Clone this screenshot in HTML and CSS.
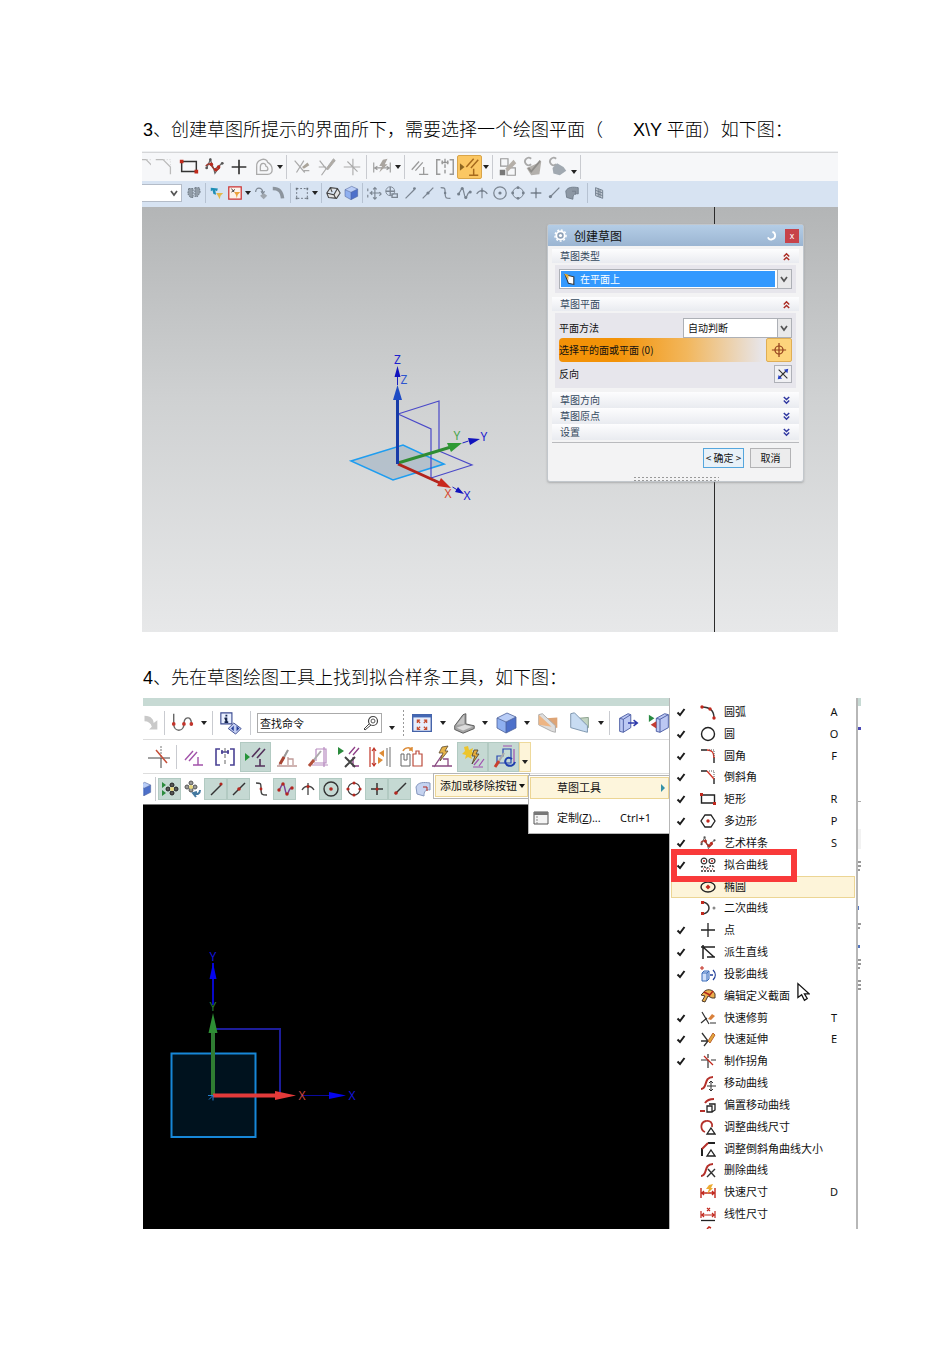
FILE: index.html
```html
<!DOCTYPE html>
<html lang="zh-CN">
<head>
<meta charset="utf-8">
<title>草图绘图步骤</title>
<link rel="stylesheet" href="styles.css">
</head>
<body>
<svg class="sprite" aria-hidden="true">
  <symbol id="fillet" viewBox="0 0 24 24"><path d="M3 4h8l8 8v8" fill="none" stroke="#bbb" stroke-width="1.4"/><path d="M12 4h7v7" fill="none" stroke="#ccc" stroke-dasharray="1 2"/></symbol>
  <symbol id="rect" viewBox="0 0 24 24"><path d="M4 6h16v11H4z" fill="none" stroke="#333" stroke-width="1.6"/><path d="M2 4h4v4H2zM18 15h4v4h-4z" fill="#c02a1c"/></symbol>
  <symbol id="spline" viewBox="0 0 24 24"><path d="M4 13 8 4l4 11 4-3 5-4M12 15l1 4 4-6" fill="none" stroke="#666" stroke-width="1.3"/><path d="M3 11c4-5 6-1 8 2s5 3 7 0" fill="none" stroke="#9b3328" stroke-width="1.5"/><g fill="#b82a1e"><circle cx="9" cy="9" r="2"/><circle cx="14" cy="15" r="2"/><circle cx="17" cy="12" r="2"/></g><g fill="#555"><circle cx="4" cy="13" r="1.5"/><circle cx="8" cy="4" r="1.5"/><circle cx="21" cy="8" r="1.5"/></g></symbol>
  <symbol id="plus" viewBox="0 0 24 24"><path d="M12 4v16M4 12h16" stroke="currentColor" stroke-width="1.8"/></symbol>
  <symbol id="profile" viewBox="0 0 24 24"><path d="M4 20v-8c-1-9 11-11 12-5 6 3 7 13 0 13zM8 16v-4c0-5 6-5 6-1 3 1 3 5 0 5z" fill="none" stroke="#aaa" stroke-width="1.4"/></symbol>
  <symbol id="trim" viewBox="0 0 24 24"><path d="m4 5 11 13M14 5 6 18M14 16h6" stroke="#aaa" stroke-width="1.3"/><path d="m12 12 6-5 2 3-6 4z" fill="#aaa49a"/></symbol>
  <symbol id="extend" viewBox="0 0 24 24"><path d="m4 5 7 9-5 7M3 12h8" fill="none" stroke="#aaa" stroke-width="1.3"/><path d="m11 14 8-11 2 2-8 10z" fill="#b0aba4" stroke="#aaa"/></symbol>
  <symbol id="corner" viewBox="0 0 24 24"><path d="M3 12h18M13 3v18M7 6l11 11" stroke="#aaa" stroke-width="1.2"/></symbol>
  <symbol id="dim" viewBox="0 0 24 24"><path d="M3 7v11M21 7v11M4 13h16m-13-2-3 2 3 2m10-4 3 2-3 2" fill="none" stroke="#999" stroke-width="1.2"/><path d="m13 4 5-1-3 6h3l-9 9 3-7H9z" fill="#aaa5a0"/></symbol>
  <symbol id="constraint" viewBox="0 0 24 24"><path d="m3 15 8-9m-4 10 8-9m1 5v8m-5 0h10" stroke="currentColor" stroke-width="1.4" fill="none"/></symbol>
  <symbol id="mirror" viewBox="0 0 24 24"><path d="M7 4H3v16h4M17 4h4v16h-4M8 7h8M9 5v4m6-4v4" fill="none" stroke="currentColor" stroke-width="1.6"/><path d="M12 3v18" stroke="#666" stroke-dasharray="4 2"/></symbol>
  <symbol id="infer" viewBox="0 0 24 24"><path d="m1 8 5 4-5 4z" fill="var(--go)"/><path d="m8 12 8-9m-3 10 8-9m-5 10v7m-5 0h10" stroke="currentColor" stroke-width="1.6"/></symbol>
  <symbol id="convert" viewBox="0 0 24 24"><path d="M4 3h8v8H4zM12 13h8v8h-9v-6" fill="none" stroke="#999" stroke-width="1.3"/><path d="M3 15h6v6H3z" fill="#777"/><path d="m9 14 9-10 3 4-9 9z" fill="#b5afa8"/></symbol>
  <symbol id="display" viewBox="0 0 24 24"><path d="M10 3a4 4 0 1 0 0 6" fill="none" stroke="#aaa" stroke-width="2"/><path d="m5 13 7-3 9-4-2 14-9 1z" fill="#b3b0ac"/><path d="m7 13 3 4 10-12" fill="none" stroke="#8f8d8a" stroke-width="2"/></symbol>
  <symbol id="finish" viewBox="0 0 24 24"><path d="M10 3a4 4 0 1 0 0 6" fill="none" stroke="#aaa" stroke-width="2"/><path d="m6 13 5-5 7 4 3 4-7 5-7-2z" fill="#a1a9b1"/></symbol>
  <symbol id="gears" viewBox="0 0 18 18"><path d="M3 4h5v10H5L2 10zM10 3h5l1 5-3 5h-3z" fill="#929da8" stroke="#66717c" stroke-dasharray="2 1"/></symbol>
  <symbol id="filter" viewBox="0 0 18 18"><path d="m2 3 8 1-1 3-2-1 1 5-3-1-1-4-2 1z" fill="#1f8fb6"/><path d="M8 9h8l-3 3-1 4-2-4z" fill="#e3b84a"/></symbol>
  <symbol id="filter2" viewBox="0 0 18 18"><path d="M2 2h14v14H2z" fill="#fdf2ea" stroke="#c33" stroke-width="1.4"/><path d="m5 4 3 4M9 5 5 8" stroke="#333"/><path d="M8 8h7l-3 3-1 4-1-4z" fill="#eda33c"/></symbol>
  <symbol id="rotate" viewBox="0 0 18 18"><path d="M3 8c0-6 7-6 8 0m-2-1 2 3 2-3" fill="none" stroke="#7e8894" stroke-width="1.4"/><path d="m8 12 4-3 4 3-4 4z" fill="#9fa6ae"/></symbol>
  <symbol id="hook" viewBox="0 0 18 18"><path d="M2 4c6 0 10 2 11 11" fill="none" stroke="#8c949d" stroke-width="4"/></symbol>
  <symbol id="marquee" viewBox="0 0 18 18"><path d="M3 4h12v11H3z" fill="none" stroke="#5f6873" stroke-dasharray="2 2"/><path d="M2 3h2v2H2zM14 3h2v2h-2zM2 14h2v2H2zM14 14h2v2h-2z" fill="#68717b"/></symbol>
  <symbol id="cubewire" viewBox="0 0 18 18"><path d="m2 9 4-6 8 1 3 5-4 6-9-1zM2 9l8 2 4-7m-4 7 2 4M6 3l2 5" fill="#e2e2e2" stroke="#444" stroke-width="1.2"/></symbol>
  <symbol id="cube" viewBox="0 0 24 24"><path d="m3 7 10-5 9 4-10 5z" fill="#b9cdf7"/><path d="m3 7 9 4v11l-9-5z" fill="#8fb0f0"/><path d="m12 11 10-5v11l-10 5z" fill="#4d70ca"/><path d="m3 7 10-5 9 4v11l-10 5-9-5zM3 7l9 4 10-5M12 11v11" fill="none" stroke="#4b6199" stroke-width=".8"/></symbol>
  <symbol id="move" viewBox="0 0 18 18"><path d="M10 3v13M4 9h13M8 5l2-2 2 2M8 14l2 2 2-2m3-6 2 2-2 2M7 7 5 9l2 2M2 4v3m0 4v3" fill="none" stroke="currentColor" stroke-width="1.3"/></symbol>
  <symbol id="orbit" viewBox="0 0 18 18"><circle cx="7" cy="7" r="5" fill="none" stroke="currentColor"/><path d="M7 2v10M2 7h10m-3 3h6v4h-6z" fill="none" stroke="currentColor" stroke-width="1.5"/></symbol>
  <symbol id="line" viewBox="0 0 18 18"><path d="M4 15 14 5" stroke="currentColor" stroke-width="1.4"/><circle cx="14" cy="4" r="1.6" fill="var(--dot)"/></symbol>
  <symbol id="mid" viewBox="0 0 18 18"><path d="M3 15 15 3" stroke="currentColor" stroke-width="1.4"/><circle cx="9" cy="9" r="1.8" fill="var(--dot)"/></symbol>
  <symbol id="scurve" viewBox="0 0 18 18"><path d="M3 3c5 0 5 0 5 6s1 6 6 6" fill="none" stroke="currentColor" stroke-width="1.4"/><circle cx="8" cy="9" r="1.4" fill="var(--dot)"/></symbol>
  <symbol id="wave" viewBox="0 0 18 18"><path d="M2 10c3 0 3-6 5-6s2 10 4 10 1-6 5-6" fill="none" stroke="var(--wave)" stroke-width="1.4"/><g fill="var(--dot)"><circle cx="3" cy="10" r="1.7"/><circle cx="7" cy="4" r="1.7"/><circle cx="11" cy="14" r="1.7"/><circle cx="16" cy="8" r="1.7"/></g></symbol>
  <symbol id="cross" viewBox="0 0 18 18"><path d="M3 10c3-5 9-5 12 0M9 3v12" fill="none" stroke="currentColor" stroke-width="1.3"/><circle cx="9" cy="6.500" r="1.5" fill="var(--dot)"/></symbol>
  <symbol id="center" viewBox="0 0 18 18"><circle cx="9" cy="9" r="7" fill="none" stroke="currentColor" stroke-width="1.4"/><circle cx="9" cy="9" r="1.8" fill="var(--dot)"/></symbol>
  <symbol id="quad" viewBox="0 0 18 18"><circle cx="9" cy="9" r="6" fill="none" stroke="currentColor" stroke-width="1.1"/><g fill="var(--dot)"><circle cx="9" cy="3" r="1.6"/><circle cx="9" cy="15" r="1.6"/><circle cx="3" cy="9" r="1.6"/><circle cx="15" cy="9" r="1.6"/></g></symbol>
  <symbol id="point" viewBox="0 0 18 18"><path d="M9 3v12M3 9h12" stroke="currentColor" stroke-width="1.5"/><circle cx="9" cy="9" r="1.5" fill="var(--dot)"/></symbol>
  <symbol id="near" viewBox="0 0 18 18"><path d="M4 14 15 3" stroke="currentColor" stroke-width="1.4"/><circle cx="5" cy="13" r="1.8" fill="var(--dot)"/></symbol>
  <symbol id="face" viewBox="0 0 18 18"><path d="M2 7c2-5 8-5 14-4v7c-5-1-6 2-6 6l-7-2z" fill="var(--face)" stroke="var(--faceline)"/><path d="M9 7h4v4" fill="none" stroke="var(--dot)"/></symbol>
  <symbol id="grid" viewBox="0 0 18 18"><path d="m4 3 8 3v9l-8-3zM7 4v9M9 5v9M4 6l8 3M4 9l8 3" fill="#c4ccd6" stroke="#6f7c8b"/></symbol>
  <symbol id="tick" viewBox="0 0 10 10"><path d="M1.500 5.500 4 8 8.500 2" fill="none" stroke="#1c1c1c" stroke-width="2"/></symbol>
  <symbol id="up2" viewBox="0 0 10 10"><path d="m2 5 3-3 3 3M2 9l3-3 3 3" fill="none" stroke="#ab2c24" stroke-width="1.6"/></symbol>
  <symbol id="down2" viewBox="0 0 10 10"><path d="m2 1 3 3 3-3M2 5l3 3 3-3" fill="none" stroke="#2e36a0" stroke-width="1.6"/></symbol>
  <symbol id="chev" viewBox="0 0 10 10"><path d="m2 3 3 4 3-4" fill="none" stroke="#555" stroke-width="1.7"/></symbol>
</svg>

<main class="doc">
  <p class="step">3、创建草图所提示的界面所下，需要选择一个绘图平面（<span class="gap">X\Y</span> 平面）如下图：</p>

  <section class="shot-one">
    <div class="bar bar-main">
      <button class="tool cut" aria-label="圆角"><svg><use href="#fillet"/></svg></button>
      <button class="tool" aria-label="倒斜角"><svg><use href="#fillet"/></svg></button>
      <button class="tool" aria-label="矩形"><svg><use href="#rect"/></svg></button>
      <button class="tool" aria-label="艺术样条"><svg><use href="#spline"/></svg></button>
      <button class="tool" aria-label="点"><svg><use href="#plus"/></svg></button>
      <button class="tool" aria-label="轮廓"><svg><use href="#profile"/></svg></button>
      <button class="drop" aria-label="更多"></button><i class="sep"></i>
      <button class="tool" aria-label="修剪"><svg><use href="#trim"/></svg></button>
      <button class="tool" aria-label="延伸"><svg><use href="#extend"/></svg></button>
      <button class="tool" aria-label="拐角"><svg><use href="#corner"/></svg></button><i class="sep"></i>
      <button class="tool" aria-label="尺寸"><svg><use href="#dim"/></svg></button>
      <button class="drop" aria-label="更多"></button><i class="sep"></i>
      <button class="tool pale" aria-label="约束"><svg><use href="#constraint"/></svg></button>
      <button class="tool pale" aria-label="对称"><svg><use href="#mirror"/></svg></button>
      <button class="tool hot" aria-label="自动约束"><svg><use href="#infer"/></svg></button>
      <button class="drop" aria-label="更多"></button><i class="sep"></i>
      <button class="tool" aria-label="转换"><svg><use href="#convert"/></svg></button>
      <button class="tool" aria-label="显示"><svg><use href="#display"/></svg></button>
      <button class="tool" aria-label="完成"><svg><use href="#finish"/></svg></button>
      <button class="drop low" aria-label="更多"></button><i class="sep"></i>
    </div>
    <div class="bar bar-snap">
      <span class="mini-select"><select aria-label="选择范围"><option></option></select><svg><use href="#chev"/></svg></span>
      <button class="snap" aria-label="齿轮"><svg><use href="#gears"/></svg></button><i class="sep"></i>
      <button class="snap" aria-label="过滤"><svg><use href="#filter"/></svg></button>
      <button class="snap" aria-label="过滤器"><svg><use href="#filter2"/></svg></button>
      <button class="drop" aria-label="更多"></button>
      <button class="snap" aria-label="旋转"><svg><use href="#rotate"/></svg></button>
      <button class="snap" aria-label="弯曲"><svg><use href="#hook"/></svg></button><i class="sep"></i>
      <button class="snap" aria-label="框选"><svg><use href="#marquee"/></svg></button>
      <button class="drop" aria-label="更多"></button><i class="sep"></i>
      <button class="snap" aria-label="线框"><svg><use href="#cubewire"/></svg></button>
      <button class="snap" aria-label="实体"><svg><use href="#cube"/></svg></button><i class="sep"></i>
      <button class="snap" aria-label="移动"><svg><use href="#move"/></svg></button>
      <button class="snap" aria-label="环绕"><svg><use href="#orbit"/></svg></button>
      <button class="snap" aria-label="端点"><svg><use href="#line"/></svg></button>
      <button class="snap" aria-label="中点"><svg><use href="#mid"/></svg></button>
      <button class="snap" aria-label="控制点"><svg><use href="#scurve"/></svg></button>
      <button class="snap" aria-label="极点"><svg><use href="#wave"/></svg></button>
      <button class="snap" aria-label="交点"><svg><use href="#cross"/></svg></button>
      <button class="snap" aria-label="圆心"><svg><use href="#center"/></svg></button>
      <button class="snap" aria-label="象限点"><svg><use href="#quad"/></svg></button>
      <button class="snap" aria-label="现有点"><svg><use href="#point"/></svg></button>
      <button class="snap" aria-label="曲线上的点"><svg><use href="#near"/></svg></button>
      <button class="snap" aria-label="面上的点"><svg><use href="#face"/></svg></button>
      <i class="sep wide"></i>
      <button class="snap" aria-label="栅格"><svg><use href="#grid"/></svg></button>
    </div>

    <div class="canvas-light">
      <svg class="scene" viewBox="0 0 696 425" preserveAspectRatio="xMinYMin meet" aria-label="坐标系">
        <path d="M572.500 0v425" stroke="#2b2b2b"/>
        <path d="m209 254 52-16 41 19-51 16z" fill="#a6b8c6" fill-opacity=".7" stroke="#1e9df0" stroke-width="1.6"/>
        <path d="m256 207 41-13v50M256 207l33 15v49M289 271l41-13-33-14" fill="none" stroke="#4a49c8" stroke-width="1.2"/>
        <path d="m256 256 53-16" stroke="#2f8d33" stroke-width="3"/><path d="m305 236 15 0-11 9z" fill="#2f9a35"/>
        <path d="m256 257 42 19" stroke="#b3241c" stroke-width="3"/><path d="m299 271-4 8 14 2z" fill="#c9281d"/>
        <path d="M255.500 257v-68" stroke="#173ba8" stroke-width="3"/><path d="m251 193 4.500-15 4.500 15z" fill="#1d4bc4"/>
        <path d="M255.500 178v-12m65 70 6-2m-16 46 5 3" stroke="#1a20c0"/>
        <path d="m252.500 170 3-11 3 11zM326 231l12 1-10 6zM316 280l6 7-9-2z" fill="#1113bd"/>
        <g class="axis"><text x="255.500" y="157" fill="#1b20cf">Z</text><text x="262" y="177" fill="#2e55cf">Z</text><text x="315" y="233" fill="#48a54b">Y</text><text x="342" y="234" fill="#1b20cf">Y</text><text x="306" y="291" fill="#d6492f">X</text><text x="325" y="293" fill="#1b20cf">X</text></g>
      </svg>

      <form class="dialog" onsubmit="return false">
        <header class="dialog-head">
          <svg viewBox="0 0 14 14"><circle cx="7" cy="7" r="4.500" fill="#8fa2b8" stroke="#fff" stroke-width="2"/><circle cx="7" cy="7" r="6" fill="none" stroke="#fff" stroke-width="1.5" stroke-dasharray="2 2"/><circle cx="7" cy="7" r="1.700" fill="#fff"/></svg>
          <h2>创建草图</h2>
          <button class="reset" aria-label="重置"><svg viewBox="0 0 12 12"><path d="M7 2c4 1 4 7 0 8-2 1-4 0-5-2" fill="none" stroke="#fff" stroke-width="2"/></svg></button>
          <button class="close" aria-label="关闭">x</button>
        </header>
        <div class="dialog-body">
          <button class="sect">草图类型<svg><use href="#up2"/></svg></button>
          <div class="panel">
            <span class="combo chosen"><svg viewBox="0 0 12 12"><path d="m2 2 8 2v7l-5-1z" fill="#fff" stroke="#333"/><path d="m1 1 4 1v5z" fill="#e5ad35"/></svg><select aria-label="草图类型"><option>在平面上</option></select><b><svg><use href="#chev"/></svg></b></span>
          </div>
          <button class="sect">草图平面<svg><use href="#up2"/></svg></button>
          <div class="panel rows">
            <div class="row"><label for="method">平面方法</label><span class="combo short"><select id="method"><option>自动判断</option></select><b><svg><use href="#chev"/></svg></b></span></div>
            <div class="row pick"><span>选择平的面或平面 (0)</span><button class="target" aria-label="选择平面"><svg viewBox="0 0 18 18"><circle cx="9" cy="9" r="4.500" fill="none" stroke="#93401d" stroke-width="1.4"/><path d="M9 1v16M1 9h16" stroke="#93401d" stroke-width="1.4"/></svg></button></div>
            <div class="row"><span>反向</span><button class="flip" aria-label="反向"><svg viewBox="0 0 16 16"><path d="m3 3 10 10M4 12l8-8" stroke="#333" stroke-width="1.3"/><path d="m9 3 5-1-1 5zM2 14l1-5 4 4z" fill="#273fc0"/></svg></button></div>
          </div>
          <button class="sect tight">草图方向<svg><use href="#down2"/></svg></button>
          <button class="sect tight">草图原点<svg><use href="#down2"/></svg></button>
          <button class="sect tight">设置<svg><use href="#down2"/></svg></button>
          <footer class="actions"><button class="ok">&lt; 确定 &gt;</button><button>取消</button></footer>
          <div class="grip"></div>
        </div>
      </form>
    </div>
  </section>

  <p class="step second">4、先在草图绘图工具上找到拟合样条工具，如下图：</p>

  <section class="shot-two">
    <div class="work">
      <div class="band"></div>
      <div class="bar bar-a">
        <button class="t-cut" aria-label="撤消"><svg viewBox="0 0 24 24"><path d="M6 4c8 0 10 5 10 8l4-3v10h-9l3-3c-1-4-4-6-8-6z" fill="#c9c9c9"/></svg></button><i class="sep"></i>
        <button class="big" aria-label="曲线"><svg viewBox="0 0 28 24"><path d="M4 2v11c0 9 11 9 11 0 0-8 8-9 8-1v3" fill="none" stroke="#666" stroke-width="1.500"/><g fill="#c3342b"><circle cx="4" cy="13" r="2"/><circle cx="15" cy="13" r="2"/><circle cx="23" cy="13" r="2"/></g></svg></button>
        <button class="drop" aria-label="更多"></button><i class="sep"></i>
        <button class="big" aria-label="信息"><svg viewBox="0 0 28 26"><path d="M3 2h12v12H3z" fill="#e8efff" stroke="#3a4990" stroke-width="1.200"/><path d="M9 4v2M7 8h2v4m-2 0h4" stroke="#16254f" stroke-width="2"/><path d="m11 19 6-6 8 6-6 6z" fill="#c2cdf1" stroke="#3a4990"/><path d="m17 16-3 3 3 3zM20 16v6l3-3z" fill="#273f9a"/></svg></button><i class="sep"></i>
        <label class="search"><input type="text" value="查找命令" aria-label="查找命令"><svg viewBox="0 0 16 16"><circle cx="10" cy="6" r="4.500" fill="none" stroke="#444" stroke-width="1.200"/><circle cx="10" cy="6" r="2" fill="none" stroke="#555"/><path d="m6 9-5 5 1 1 6-5" fill="none" stroke="#444"/></svg></label>
        <button class="drop low" aria-label="更多"></button><i class="dots"></i>
        <button class="big" aria-label="适合窗口"><svg viewBox="0 0 28 24"><path d="M4 3h20v18H4z" fill="#e7edfb" stroke="#4462a8" stroke-width="1.500"/><path d="M4 3h20v3H4z" fill="#4367b4"/><path d="m9 9 3 3m7-3-3 3m-7 7 3-3m7 3-3-3M9 12V9h3m4 0h3v3M9 16v3h3m4 0h3v-3" fill="none" stroke="#c64c30" stroke-width="1.300"/></svg></button>
        <button class="drop" aria-label="更多"></button>
        <button class="big" aria-label="渲染"><svg viewBox="0 0 28 24"><path d="m4 15 9-12 3-1v11l9 2v3l-12 5-9-4z" fill="#a5a5a5" stroke="#555"/><path d="m6 14 8-10v9z" fill="#c6c6c6"/><path d="m6 17 9-3 8 2-10 4z" fill="#dcdcdc"/></svg></button>
        <button class="drop" aria-label="更多"></button>
        <button class="big" aria-label="着色"><svg><use href="#cube"/></svg></button>
        <button class="drop" aria-label="更多"></button>
        <button class="big" aria-label="剖切"><svg viewBox="0 0 28 24"><path d="m12 7 12-1v11l-9 1z" fill="#dda476"/><path d="m4 3 4-1 14 13v7l-4-1L4 14z" fill="#ddd" stroke="#aaa"/><path d="M4 3 18 16 4 14z" fill="#edb584"/></svg></button>
        <button class="big" aria-label="编辑截面"><svg viewBox="0 0 28 24"><path d="m12 7 11-1v11l-9 1z" fill="#c2d4c2" stroke="#889e8a"/><path d="m4 2 4-1 14 14v7l-4-1L4 17z" fill="#c8dcf2" stroke="#7992ab"/></svg></button>
        <button class="drop" aria-label="更多"></button><i class="sep"></i>
        <button class="big" aria-label="拉伸"><svg viewBox="0 0 28 24"><path d="m5 7 9-5 3 1v14l-8 5-4-1zM5 7l4 1v14M9 8l8-5" fill="#bcc8f3" stroke="#495ba2"/><path d="M14 12h9m-3-3 4 3-4 3" fill="none" stroke="#2d39aa" stroke-width="1.600"/></svg></button>
        <button class="big" aria-label="移动面"><svg viewBox="0 0 28 24"><path d="m10 7 9-5 4 1v14l-9 5-4-1zM10 7l4 1v14M14 8l9-5" fill="#bcc8f3" stroke="#495ba2"/><path d="m2 3 6 4-6 4z" fill="#298b43"/><path d="m10 10-6 4 6 4z" fill="#c43c32"/></svg></button>
      </div>
      <div class="bar bar-b">
        <button class="mid" aria-label="制作拐角"><svg viewBox="0 0 24 24"><path d="M1 13h22M14 13v10" stroke="#444"/><path d="M14 1v12" stroke="#777" stroke-dasharray="2 1"/><path d="m9 5 11 13" stroke="#c54d36" stroke-width="1.500"/></svg></button><i class="sep"></i>
        <button class="mid plum" aria-label="约束"><svg><use href="#constraint"/></svg></button>
        <button class="mid navy" aria-label="对称"><svg><use href="#mirror"/></svg></button>
        <button class="mid on" aria-label="自动约束"><svg><use href="#infer"/></svg></button>
        <button class="mid" aria-label="显示约束"><svg viewBox="0 0 24 24"><path d="m4 20 9-15m0 7v8M2 21h20M13 14h5v6" fill="none" stroke="#c09a98" stroke-width="1.300"/><path d="m7 16 6-11" stroke="#999" stroke-width="2"/><path d="m5 19 4-7" stroke="#a84432" stroke-width="3"/></svg></button>
        <button class="mid" aria-label="自动尺寸"><svg viewBox="0 0 24 24"><path d="M10 4h10v14H8m2-14v12M18 2v20M6 20h16" fill="none" stroke="#b78bc0" stroke-width="1.200"/><path d="M7 16 15 6" stroke="#aaa" stroke-width="2"/><path d="m3 21 5-6" stroke="#b3503c" stroke-width="3"/></svg></button>
        <button class="mid" aria-label="删除约束"><svg viewBox="0 0 24 24"><path d="m1 2 6 4-6 4z" fill="#2a8b3c"/><path d="m12 9 6-7m-2 8 6-7M16 12v9h6" fill="none" stroke="#8e3f87" stroke-width="1.300"/><path d="m8 12 10 10m0-10L8 22" stroke="#444" stroke-width="2"/></svg></button>
        <button class="mid" aria-label="动画尺寸"><svg viewBox="0 0 24 24"><path d="M2 2v20M6 4v16M4 6l2-3 2 3m-4 12 2 3 2-3" fill="none" stroke="#c13527" stroke-width="1.200"/><path d="M19 3v18M22 2v20" stroke="#888" stroke-width="1.200"/><path d="m16 5-5 3 5 4zM10 12l5 3-5 4z" fill="#dd8c37"/></svg></button>
        <button class="mid" aria-label="转换对象"><svg viewBox="0 0 24 24"><path d="M2 9v12h9V9H8v6H5V9z" fill="none" stroke="#666"/><path d="M14 21V9h3V6h3v3h3v12z" fill="none" stroke="#bc4c3c" stroke-width="1.200"/><path d="M4 6c2-4 7-4 9-1V2m0 3h-3" fill="none" stroke="#db8a35" stroke-width="1.500"/></svg></button>
        <button class="mid" aria-label="备选解"><svg viewBox="0 0 24 24"><path d="m4 22 8-12M2 21h20M13 14h5v7" fill="none" stroke="#8b4b83" stroke-width="1.300"/><path d="m12 2 6-1-3 5h3l-8 10 3-8h-4z" fill="#e6b44a" stroke="#5d4b30" stroke-width=".8"/></svg></button>
        <button class="mid on" aria-label="推断约束"><svg viewBox="0 0 24 24"><path d="m7 1 1 4 4-2-1 4 4 2-5 1 1 4-4-2-3 2 1-4-4-1 3-3-1-4z" fill="#edc52c"/><path d="m13 5-2 6h3l-3 8 7-10h-3l2-4z" fill="#e5ac3c" stroke="#473c2b" stroke-width=".8"/><path d="m13 20 5-6m0 7 5-7M12 22h10" stroke="#a04fb0" stroke-width="1.200"/></svg></button>
        <button class="mid on" aria-label="连续尺寸"><svg viewBox="0 0 24 24"><path d="M11 4h8v14H5v-7h6z" fill="none" stroke="#2a49b0" stroke-width="1.200"/><path d="M11 1h9M22 4v14" stroke="#a04fb0" stroke-width="1.200"/><path d="M20 14c-5-4-9 2-5 6 4 2 7 0 8-3" fill="none" stroke="#1e3fae" stroke-width="2"/><path d="m7 16 5-8" stroke="#aaa" stroke-width="2"/><path d="m3 22 4-6" stroke="#c9402d" stroke-width="3"/></svg></button>
        <button class="drop low cream" aria-label="添加或移除"></button>
      </div>
      <div class="bar bar-c">
        <button class="half" aria-label="实体"><svg><use href="#cube"/></svg></button><i class="sep"></i>
        <button class="small on" aria-label="启用捕捉"><svg viewBox="0 0 18 18"><path d="m1 2 4 3-4 3zM1 10l4 3-4 3z" fill="#2b8b3d"/><g fill="#555" stroke="#222"><circle cx="11" cy="5" r="2"/><circle cx="11" cy="13" r="2"/><circle cx="7" cy="9" r="2"/><circle cx="15" cy="9" r="2"/></g><circle cx="11" cy="9" r="2" fill="#eada7c"/></svg></button>
        <button class="small" aria-label="清除捕捉"><svg viewBox="0 0 18 18"><g fill="#999" stroke="#555"><circle cx="7" cy="3" r="2"/><circle cx="7" cy="10" r="2"/><circle cx="3" cy="7" r="2"/><circle cx="11" cy="7" r="2"/></g><circle cx="7" cy="7" r="2" fill="#eada7c"/><path d="M10 13c3 2 6 1 6-3m-3 2-4 1 3 4" fill="none" stroke="#4479a0" stroke-width="2"/></svg></button>
        <button class="small on" aria-label="端点"><svg><use href="#line"/></svg></button>
        <button class="small on" aria-label="中点"><svg><use href="#mid"/></svg></button>
        <button class="small" aria-label="控制点"><svg><use href="#scurve"/></svg></button>
        <button class="small on" aria-label="极点"><svg><use href="#wave"/></svg></button>
        <button class="small" aria-label="交点"><svg><use href="#cross"/></svg></button>
        <button class="small on" aria-label="圆心"><svg><use href="#center"/></svg></button>
        <button class="small" aria-label="象限点"><svg><use href="#quad"/></svg></button>
        <button class="small on" aria-label="现有点"><svg><use href="#point"/></svg></button>
        <button class="small on" aria-label="曲线上的点"><svg><use href="#near"/></svg></button>
        <button class="small" aria-label="面上的点"><svg><use href="#face"/></svg></button>
      </div>
      <div class="canvas-dark">
        <svg class="scene" viewBox="0 0 526 424" preserveAspectRatio="xMinYMin meet" aria-label="草图坐标系">
          <path d="M28.500 248.500h84v83.500h-84z" fill="#00121e" stroke="#1787d8" stroke-width="2"/>
          <path d="M72 224h65v64" fill="none" stroke="#1d1d9a" stroke-width="2"/>
          <path d="M70 158v42" stroke="#0808c8" stroke-width="2"/><path d="m66.500 174 3.500-16 3.500 16z" fill="#0505ee"/>
          <path d="M159 290.500h28" stroke="#0a0a9c"/><path d="m186 287 17 3.500-17 3.500z" fill="#0505ee"/>
          <path d="M70 290v-64" stroke="#2f7d32" stroke-width="4"/><path d="m65.500 228 4.500-20 4.500 20z" fill="#2e8f34"/>
          <path d="M70 290.500h64" stroke="#e23a3a" stroke-width="4"/><path d="m132 286 21 4.500-21 4.500z" fill="#e43a3a"/>
          <path d="M65 290.500h5v5m-4-1 4-4" stroke="#247fd0" fill="none"/>
          <g class="axis"><text x="70" y="156" fill="#1414dd">Y</text><text x="70" y="206" fill="#2c7a35">Y</text><text x="159" y="295" fill="#c4453f">X</text><text x="209" y="295" fill="#1414dd">X</text></g>
        </svg>
      </div>

      <div class="pop-add"><button>添加或移除按钮<i></i></button></div>
      <div class="pop-sub" role="menu">
        <button class="lit" role="menuitem">草图工具<i></i></button>
        <button role="menuitem"><svg viewBox="0 0 16 14"><path d="M1 1h14v12H1z" fill="#f4f4f4" stroke="#555"/><path d="M1 1h14v3H1z" fill="#777"/><path d="M4 5v8" stroke="#888" stroke-dasharray="2 1"/></svg><span>定制(<u>Z</u>)...</span><kbd>Ctrl+1</kbd></button>
      </div>
    </div>

    <div class="menu" role="menu">
      <div class="items">
        <button><svg class="ck"><use href="#tick"/></svg><svg class="ic" viewBox="0 0 16 16"><path d="M2 3c7 0 12 3 12 11" fill="none" stroke="#333" stroke-width="1.400"/><g fill="#c1281d"><circle cx="2" cy="3" r="1.700"/><circle cx="10" cy="5" r="1.700"/><circle cx="14" cy="14" r="1.700"/></g></svg><span>圆弧</span><kbd>A</kbd></button>
        <button><svg class="ck"><use href="#tick"/></svg><svg class="ic" viewBox="0 0 16 16"><circle cx="8" cy="8" r="6.500" fill="none" stroke="#222" stroke-width="1.400"/></svg><span>圆</span><kbd>O</kbd></button>
        <button><svg class="ck"><use href="#tick"/></svg><svg class="ic" viewBox="0 0 16 16"><path d="M1 2h6m7 7v6" stroke="#222" stroke-width="1.400"/><path d="M7 2c5 0 7 2 7 8" fill="none" stroke="#d33527" stroke-width="1.400"/><path d="M9 2h5v6" fill="none" stroke="#555" stroke-dasharray="1 1"/></svg><span>圆角</span><kbd>F</kbd></button>
        <button><svg class="ck"><use href="#tick"/></svg><svg class="ic" viewBox="0 0 16 16"><path d="M1 2h6m7 7v6" stroke="#222" stroke-width="1.400"/><path d="m7 2 7 8" stroke="#d33527" stroke-width="1.400"/><path d="M9 2h5v6" fill="none" stroke="#555" stroke-dasharray="1 1"/></svg><span>倒斜角</span></button>
        <button><svg class="ck"><use href="#tick"/></svg><svg class="ic" viewBox="0 0 16 16"><path d="M1.500 4h13v8h-13z" fill="none" stroke="#222" stroke-width="1.400"/><path d="M0 2h3v3H0zM13 11h3v3h-3z" fill="#c1281d"/></svg><span>矩形</span><kbd>R</kbd></button>
        <button><svg class="ck"><use href="#tick"/></svg><svg class="ic" viewBox="0 0 16 16"><path d="M5 2h6l4 6-4 6H5L1 8z" fill="none" stroke="#222" stroke-width="1.300"/><circle cx="8" cy="8" r="1.700" fill="#c1281d"/></svg><span>多边形</span><kbd>P</kbd></button>
        <button><svg class="ck"><use href="#tick"/></svg><svg class="ic" viewBox="2 2 21 19"><use href="#spline" width="24" height="24"/></svg><span>艺术样条</span><kbd>S</kbd></button>
        <button><svg class="ck"><use href="#tick"/></svg><svg class="ic" viewBox="0 0 16 16"><circle cx="4" cy="4" r="2.800" fill="none" stroke="#333" stroke-width="1.200"/><ellipse cx="12" cy="4" rx="3" ry="2.500" fill="none" stroke="#333" stroke-width="1.200"/><path d="M3 4h2m6 0h2" stroke="#c1281d" stroke-width="1.500"/><path d="M1 10c4-2 5 3 8 0s4 0 6 0M1 14h14" fill="none" stroke="#333" stroke-width="1.400" stroke-dasharray="2 1"/><path d="M3 12h10" stroke="#c1281d" stroke-dasharray="1 2"/></svg><span>拟合曲线</span></button>
        <button class="lit"><i class="ck"></i><svg class="ic" viewBox="0 0 16 16"><ellipse cx="8" cy="8" rx="7" ry="5" fill="none" stroke="#222" stroke-width="1.400"/><path d="m8 5.500 2.500 2.500L8 10.500 5.500 8z" fill="#c1281d"/></svg><span>椭圆</span></button>
        <button><i class="ck"></i><svg class="ic" viewBox="0 0 16 16"><path d="M3 2c8 2 8 10 0 12" fill="none" stroke="#333" stroke-width="1.500"/><path d="M1 1h3v3H1zM1 12h3v3H1z" fill="#c1281d"/><circle cx="14" cy="8" r="1.500" fill="#888"/></svg><span>二次曲线</span></button>
        <button><svg class="ck"><use href="#tick"/></svg><svg class="ic" viewBox="0 0 16 16"><path d="M8 1v14M1 8h14" stroke="#222" stroke-width="1.300"/></svg><span>点</span></button>
        <button><svg class="ck"><use href="#tick"/></svg><svg class="ic" viewBox="0 0 16 16"><path d="M1 3h14M3 1v14M3 3l11 10M7 13h8" fill="none" stroke="#222" stroke-width="1.500"/></svg><span>派生直线</span></button>
        <button><svg class="ck"><use href="#tick"/></svg><svg class="ic" viewBox="0 0 16 16"><path d="M0 2h4M2 0v4" stroke="#c1281d"/><path d="m2 7 2-2h5v8l-2 2H2zM2 7h5v8M7 7l2-2" fill="#cfe0fa" stroke="#3a6db9"/><path d="M10 9h3M13 4c3 3 3 7 0 10" fill="none" stroke="#23409a" stroke-width="1.300"/></svg><span>投影曲线</span></button>
        <button><i class="ck"></i><svg class="ic" viewBox="0 0 16 16"><path d="M3 5c3-5 10-4 12 1v4h-3L8 8l-3 6-3-1 3-5-4-1z" fill="#edb04e" stroke="#4c3a28"/><path d="m4 4 6 3m3-4-4 5" stroke="#b3281c" stroke-width="1.500"/></svg><span>编辑定义截面</span></button>
        <button><svg class="ck"><use href="#tick"/></svg><svg class="ic" viewBox="0 0 16 16"><path d="m2 2 7 12M7 8l-6 5m9 0h6" stroke="#333" stroke-width="1.200"/><path d="m8 9 4-5 3 2-4 4z" fill="#d9803a"/></svg><span>快速修剪</span><kbd>T</kbd></button>
        <button><svg class="ck"><use href="#tick"/></svg><svg class="ic" viewBox="0 0 16 16"><path d="m2 2 6 8-4 5M1 10h7" fill="none" stroke="#333" stroke-width="1.300"/><path d="m8 10 5-8 2 2-5 8z" fill="#e3a93b" stroke="#be6530"/></svg><span>快速延伸</span><kbd>E</kbd></button>
        <button><svg class="ck"><use href="#tick"/></svg><svg class="ic" viewBox="0 0 16 16"><path d="M1 7h7v8M8 1v4m3 2h5" fill="none" stroke="#333" stroke-width="1.200"/><path d="m4 3 9 9" stroke="#c1281d" stroke-width="1.300"/></svg><span>制作拐角</span></button>
        <button><i class="ck"></i><svg class="ic" viewBox="0 0 16 16"><path d="M1 14c7 0 2-12 12-12" fill="none" stroke="#b4302a" stroke-width="2"/><path d="M11 6v9m-4-4h9M9 8l2-2 2 2m-4 6 2 2 2-2" fill="none" stroke="#333"/></svg><span>移动曲线</span></button>
        <button><i class="ck"></i><svg class="ic" viewBox="0 0 16 16"><path d="M0 14h5m0-8c2-3 4-4 9-4" fill="none" stroke="#b4302a" stroke-width="2"/><path d="M7 9h5v6H7zM9 7h6v6l-3 2" fill="none" stroke="#222" stroke-width="1.300"/></svg><span>偏置移动曲线</span></button>
        <button><i class="ck"></i><svg class="ic" viewBox="0 0 16 16"><path d="M5 13C0 11 0 3 6 2c4-1 7 2 6 6" fill="none" stroke="#b4302a" stroke-width="1.800"/><path d="m11 9 4 6H7z" fill="none" stroke="#222" stroke-width="1.300"/></svg><span>调整曲线尺寸</span></button>
        <button><i class="ck"></i><svg class="ic" viewBox="0 0 16 16"><path d="M2 15V7m6-5h7" stroke="#222" stroke-width="2"/><path d="m2 8 6-6" stroke="#b4302a" stroke-width="2"/><path d="m11 9 4 6H7z" fill="none" stroke="#222" stroke-width="1.300"/></svg><span>调整倒斜角曲线大小</span></button>
        <button><i class="ck"></i><svg class="ic" viewBox="0 0 16 16"><path d="M1 14c7 0 2-12 12-12" fill="none" stroke="#b4302a" stroke-width="2"/><path d="m8 7 7 8M15 7l-8 8" stroke="#333" stroke-width="1.400"/></svg><span>删除曲线</span></button>
        <button><i class="ck"></i><svg class="ic" viewBox="0 0 16 16"><path d="M1 4v10M15 4v10M1 9h14M4 7 2 9l2 2m8-4 2 2-2 2" fill="none" stroke="#c1281d" stroke-width="1.400"/><path d="m9 1 4-1-2 4h2l-6 6 2-5H6z" fill="#edaa32"/></svg><span>快速尺寸</span><kbd>D</kbd></button>
        <button><i class="ck"></i><svg class="ic" viewBox="0 0 16 16"><path d="M1 5v7M15 5v7M1 9h14M4 7 2 9l2 2m8-4 2 2-2 2M7 2l3 3m0-3L7 5" fill="none" stroke="#c1281d" stroke-width="1.200"/><path d="M1 14.500h14" stroke="#222" stroke-width="1.300"/></svg><span>线性尺寸</span></button>
      </div>
      <svg class="peek" viewBox="0 0 16 4"><path d="m9 4 2-2 2 1" fill="none" stroke="#c1281d" stroke-width="1.500"/></svg>
      <div class="mark"></div>
      <svg class="pointer" viewBox="0 0 14 20"><path d="M1 1v15l4-3 3 6 3-2-3-5h5z" fill="#fff" stroke="#111" stroke-width="1.400"/></svg>
    </div>
    <div class="edge"><svg viewBox="0 0 3 531" preserveAspectRatio="xMinYMin slice"><path d="M0 164h3M0 168h3M0 172h2M0 226h3M0 230h2M0 262h3M0 266h3M0 270h2M0 283h3M0 287h3M0 291h3" stroke="#333"/><path d="M0 208h1v4H0zM0 247h2v3H0z" fill="#5577c0"/></svg></div>
  </section>
</main>
</body>
</html>
```
FILE: styles.css
```css
* { box-sizing: border-box; }
body {
  margin: 0;
  background: #fff;
  color: #111;
  font-family: "Liberation Sans", "Noto Sans CJK SC", sans-serif;
}
button, input, select {
  margin: 0;
  padding: 0;
  border: 0;
  background: none;
  color: inherit;
  font: inherit;
}
svg { display: block; flex: none; }
.sprite { position: absolute; width: 0; height: 0; }

.doc { padding: 118px 89px 116px 142px; }
.step {
  margin: 0 0 9px 1px;
  font-size: 18px;
  line-height: 24px;
  font-weight: 300;
  color: #000;
  white-space: nowrap;
}
.step .gap { margin-left: 30px; }
.step.second { margin: 34px 0 8px 1px; }

/* toolbars */
.bar { display: flex; align-items: center; overflow: hidden; }
.bar > * { flex: none; }
.bar button { display: flex; align-items: center; justify-content: center; }
.sep { width: 1px; height: 24px; margin: 0 2px; background: #c9cbd0; }
.drop { width: 8px; height: 20px; }
.drop::after { content: ""; border: 3px solid transparent; border-top: 4px solid #222; border-bottom: 0; }
.drop.low { padding-top: 10px; }

/* first capture */
.shot-one { margin-right: 23px; border-top: 1px solid #eef0f2; }
.bar-main { height: 29px; background: #f6f7f9; border-top: 1px solid #d5d6d8; }
.tool { width: 25px; height: 24px; color: #333; }
.tool svg { width: 22px; height: 22px; }
.tool.cut { width: 9px; overflow: hidden; }
.tool.pale { color: #9a9a9a; }
.tool.hot { --go: #8d6521; color: #a76a1d; background: #fbc763; border: 1px solid #d9a54a; border-radius: 2px; }
.bar-snap {
  --dot: #75808d; --wave: #7b8591; --face: #8c97a4; --faceline: #6f7b88;
  height: 26px;
  padding-bottom: 2px;
  color: #7b8591;
  background: #d7e3f2;
}
.bar-snap .sep { height: 20px; background: #b6c2d2; }
.bar-snap .sep.wide { margin: 0 3px 0 6px; }
.snap { width: 18px; height: 22px; }
.snap svg { width: 16px; height: 16px; }
.mini-select { display: flex; align-items: center; width: 40px; height: 18px; margin-right: 3px; background: #fff; border: 1px solid #b4bcc8; border-left: 0; }
.mini-select select { flex: 1; min-width: 0; appearance: none; }
.mini-select svg { width: 10px; height: 10px; margin-right: 2px; }

.canvas-light { position: relative; background: linear-gradient(#b3b5b6, #cfd1d2 45%, #e7e8e9); }
.scene { width: 100%; height: auto; }
.axis { font: 12px "Noto Sans", sans-serif; text-anchor: middle; }

/* dialog */
.dialog {
  position: absolute;
  top: 17px;
  right: 34px;
  width: 257px;
  background: #f3f3f4;
  border: 1px solid #c2c7cc;
  border-radius: 3px;
  box-shadow: 0 1px 2px #8888;
  font: 10px/14px "Noto Sans CJK SC", sans-serif;
  color: #111;
}
.dialog-head { display: flex; align-items: center; height: 21px; padding: 0 4px 0 6px; background: linear-gradient(#b4cde6, #9bb5d2); }
.dialog-head > svg { width: 13px; height: 13px; }
.dialog-head h2 { flex: 1; margin: 0 0 0 7px; font-size: 12px; font-weight: 400; line-height: 18px; }
.reset svg { width: 11px; height: 11px; margin-right: 8px; }
.close { width: 14px; height: 14px; background: #c7424a; color: #fff; font-size: 9px; line-height: 10px; }
.dialog-body { padding: 3px 4px 0; }
.sect { display: flex; align-items: center; justify-content: space-between; width: 100%; height: 14px; padding: 0 8px; color: #34495e; background: linear-gradient(#fdfdfe, #e9ebf0); }
.sect svg { width: 9px; height: 9px; }
.sect.tight { height: 16px; }
.panel { margin: 2px 3px 4px; padding: 4px; background: #e7e6ec; }
.panel.rows { padding-bottom: 2px; }
.combo { display: flex; align-items: stretch; height: 20px; background: #fff; border: 1px solid #adb0b6; }
.combo select { flex: 1; min-width: 0; padding-left: 4px; appearance: none; }
.combo b { display: flex; align-items: center; width: 14px; padding-left: 1px; background: #e9e9ea; border-left: 1px solid #adb0b6; }
.combo b svg { width: 10px; height: 10px; }
.combo.chosen > svg { width: 17px; height: 16px; margin: 1px 0 1px 1px; padding: 1px 2px; background: #3399fe; }
.combo.chosen select { margin: 1px 2px 1px 0; padding-left: 2px; background: #3399fe; color: #fff; }
.combo.short { width: 109px; }
.row { display: flex; align-items: center; justify-content: space-between; height: 24px; }
.pick { border-radius: 4px 0 0 4px; background: linear-gradient(90deg, #f39207 25%, #f2b75d 55%, #e7e6ec 88%); }
.panel .row:first-child { height: 21px; }
.target { display: grid; place-items: center; width: 26px; height: 24px; background: #fdd47c; border: 1px solid #dfae55; border-radius: 2px; }
.target svg { width: 16px; height: 16px; }
.flip { display: grid; place-items: center; width: 18px; height: 18px; background: #f0f0f3; border: 1px solid #afb1b8; }
.flip svg { width: 14px; height: 14px; }
.actions { display: flex; justify-content: flex-end; gap: 6px; margin-top: 2px; padding: 5px 8px 8px; border-top: 1px solid #b9babd; }
.actions button { width: 41px; height: 20px; white-space: nowrap; background: #ececed; border: 1px solid #b3b3b5; }
.actions .ok { border-color: #55a6dd; background: #e8f1f8; }
.grip { width: 86px; height: 5px; margin: 0 auto; background: radial-gradient(circle, #999 1px, transparent 1px) 0 0 / 4px 3px; }

/* second capture */
.shot-two { display: flex; margin-left: 1px; }
.work { position: relative; flex: 1; min-width: 0; background: #fff; }
.band { height: 8px; background: #c7dad4; }
.bar-a { height: 34px; border-bottom: 1px solid #ddd; }
.bar-b { height: 34px; border-bottom: 1px solid #ddd; }
.bar-c { --dot: #b3271f; --wave: #7a3c96; --face: #c5d3f0; --faceline: #8597bd; height: 31px; color: #444; border-bottom: 1px solid #777; }
.bar .t-cut { width: 18px; overflow: hidden; justify-content: flex-end; }
.t-cut svg { width: 22px; height: 22px; }
.bar-a .big { width: 32px; height: 28px; }
.bar-a .big svg { width: 26px; height: 24px; }
.bar-a .drop { width: 10px; }
.bar-a .sep { margin: 0 2px 0 3px; }
.search { display: flex; align-items: center; width: 125px; height: 20px; margin: 0 5px 0 4px; padding: 0 2px; border: 1px solid #aaa; }
.search input { flex: 1; min-width: 0; height: 18px; font: 11px "Noto Sans CJK SC", sans-serif; }
.search svg { width: 16px; height: 16px; }
.dots { width: 3px; height: 28px; margin: 0 1px 0 5px; background: radial-gradient(circle, #999 1px, transparent 1px) 0 0 / 3px 4px; }
.mid { width: 31px; height: 30px; }
.mid svg { width: 24px; height: 24px; }
.bar-b .sep { margin: 0 2px; }
.mid.plum { color: #a253aa; width: 30px; }
.mid.navy { color: #4a4294; }
.on { --go: #26943a; color: #54325b; background: #c5d9d3; border: 1px solid #b2cac2; }
.bar-b .cream { width: 12px; height: 30px; background: #fdf4d9; border: 1px solid #eed99b; }
.half { width: 10px; overflow: hidden; }
.half svg { width: 16px; height: 16px; margin-left: -8px; }
.bar-c .sep { margin: 0 2px; }
.small { width: 23px; height: 22px; }
.small svg { width: 18px; height: 18px; }
.bar-c .on { color: #333; }
.canvas-dark { height: 424px; background: #000; overflow: hidden; }

.pop-add, .pop-sub { position: absolute; background: #fff; border: 1px solid #b5b5b5; font: 11px/16px "Noto Sans", "Noto Sans CJK SC", sans-serif; white-space: nowrap; }
.pop-add { top: 75px; right: 139px; padding: 1px; }
.pop-add button { display: flex; align-items: center; gap: 2px; height: 22px; padding: 0 2px 0 4px; background: #fdf5dc; border: 1px solid #ecd594; }
.pop-add i { border: 3px solid transparent; border-top: 4px solid #111; border-bottom: 0; }
.pop-sub { top: 77px; right: 0; width: 141px; border-right: 0; padding: 1px 0 2px 1px; }
.pop-sub button { display: flex; align-items: center; width: 100%; height: 26px; padding-left: 3px; }
.pop-sub svg { width: 16px; height: 14px; margin-right: 8px; }
.pop-sub .lit { justify-content: space-between; height: 22px; margin-bottom: 6px; padding: 0 3px 0 26px; background: #fdf5dc; border: 1px solid #ecd594; }
.pop-sub .lit i { border: 4px solid transparent; border-left: 4px solid #3592a8; border-right: 0; }
kbd { font: inherit; }
.pop-sub kbd { margin: 0 18px 0 auto; }

.menu { position: relative; width: 189px; padding: 3px 0 0; overflow: hidden; background: #fff; border: solid #b7b7b7; border-width: 0 2px 0 1px; font: 11px/16px "Noto Sans", "Noto Sans CJK SC", sans-serif; }
.items { display: grid; grid-template-rows: repeat(24, 1fr); height: 524px; }
.items button { display: flex; align-items: center; min-height: 0; margin: 0 1px; padding: 0 14px 0 4px; border: 1px solid transparent; text-align: left; white-space: nowrap; }
.items .ck { width: 10px; height: 10px; }
.items .ic { width: 16px; height: 16px; margin: 0 8px 0 14px; }
.items kbd { width: 12px; margin-left: auto; text-align: center; }
.items .lit { background: #fdf4d9; border-color: #ecd594; }
.peek { width: 16px; height: 4px; margin-left: 28px; }
.mark { position: absolute; top: 151px; left: 1px; width: 126px; height: 33px; border: 6px solid #f93a3a; }
.pointer { position: absolute; top: 284px; left: 127px; width: 13px; height: 20px; }
.edge { width: 3px; overflow: hidden; background: linear-gradient(#c7dad4 8px, #fff 8px 29px, #4b49b5 29px 32px, #fff 32px 103px, #aaa 103px 104px, #fff 104px 131px, #f2f2f2 131px 151px, #fff 151px); }
.edge svg { width: 3px; height: 531px; }
```
